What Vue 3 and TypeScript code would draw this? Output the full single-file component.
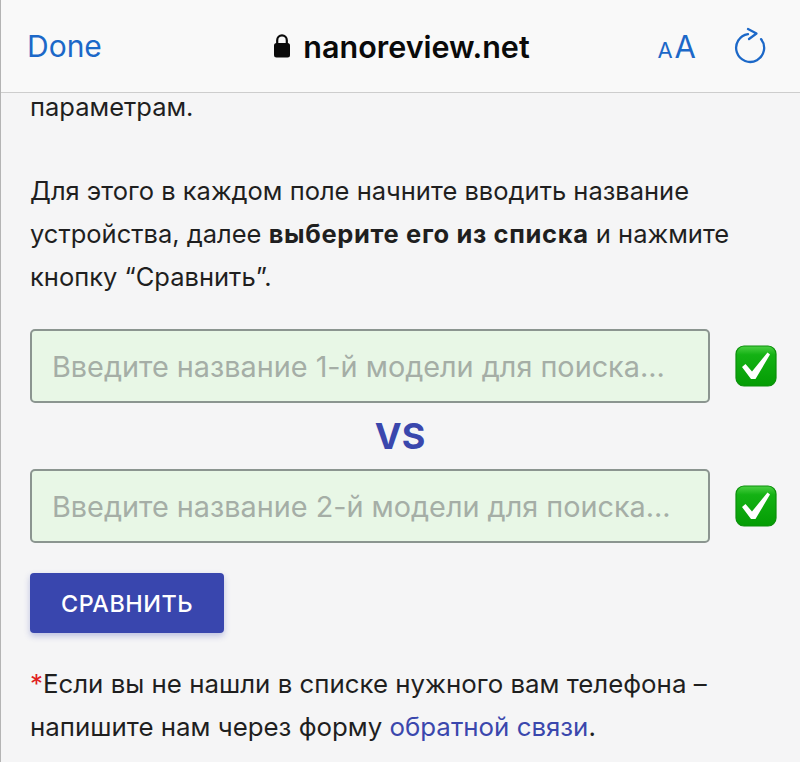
<script setup lang="ts">
const fields = [
  "Введите название 1-й модели для поиска...",
  "Введите название 2-й модели для поиска...",
];
</script>

<template>
  <div class="page">
    <header class="bar">
      <span class="done">Done</span>
      <span class="address">
        <svg class="lock" width="18" height="26" viewBox="0 0 18 26">
          <path d="M4.200 11V7.200a4.800 4.800 0 0 1 9.600 0V11" fill="none" stroke="#0a0a0a" stroke-width="2.200" />
          <rect x="1" y="10" width="16" height="14.500" rx="2.500" fill="#0a0a0a" />
        </svg>
        nanoreview.net
      </span>
      <span class="tools">
        <span class="aa"><small>A</small>A</span>
        <svg class="reload" width="32" height="40" viewBox="0 0 32 40">
          <path d="M27 13.100A14 14 0 1 1 14 8.100" fill="none" stroke="#1c68c8" stroke-width="2.300" stroke-linecap="round" />
          <path d="M14 3l8.500 4.500L15 13" fill="none" stroke="#1c68c8" stroke-width="2.300" stroke-linecap="round" stroke-linejoin="round" />
        </svg>
      </span>
    </header>

    <main class="content">
      <p class="lead">параметрам.</p>
      <p class="intro">
        Для этого в каждом поле начните вводить название устройства, далее
        <b>выберите его из списка</b> и нажмите кнопку “Сравнить”.
      </p>

      <template v-for="(placeholder, i) in fields" :key="i">
        <div v-if="i > 0" class="vs">VS</div>
        <div class="field">
          <div class="input">{{ placeholder }}</div>
          <svg class="check" width="42" height="42" viewBox="0 0 42 42">
            <defs>
              <linearGradient :id="`green${i}`" x1="0" y1="0" x2="0" y2="1">
                <stop offset="0" stop-color="#4ccf44" />
                <stop offset="0.22" stop-color="#14b214" />
                <stop offset="1" stop-color="#049c04" />
              </linearGradient>
            </defs>
            <rect x="1" y="1" width="40" height="40" rx="8" :fill="`url(#green${i})`" stroke="#0a8f0a" stroke-width="1.200" />
            <path d="M7 22l3.500-3 6.500 7.500L32.500 7.500l2.500 2-14.500 24.500h-4.500z" fill="#fff" />
          </svg>
        </div>
      </template>

      <button class="compare" type="button">СРАВНИТЬ</button>

      <p class="note">
        <span class="star">*</span>Если вы не нашли в списке нужного вам телефона –
        напишите нам через форму <a class="link">обратной связи</a>.
      </p>
    </main>
  </div>
</template>

<style scoped>
.page {
  width: 800px;
  height: 762px;
  overflow: hidden;
  box-sizing: border-box;
  border-left: 1px solid #b4b4b4;
  background: #f5f5f6;
  font-family: Inter, "Noto Sans", sans-serif;
  color: #1f1f1f;
}

.bar {
  position: relative;
  z-index: 1;
  height: 93px;
  box-sizing: border-box;
  padding: 0 26px;
  display: grid;
  grid-template-columns: 1fr auto 1fr;
  align-items: center;
  background: #f9f9f9;
  border-bottom: 1px solid #cdcdcd;
}

.done {
  font-size: 30px;
  color: #1c68c8;
}

.address {
  display: flex;
  align-items: center;
  gap: 12px;
  margin-left: 2px;
  font-size: 30.500px;
  font-weight: 600;
  color: #0a0a0a;
}

.tools {
  justify-self: end;
  margin-right: 8px;
  display: flex;
  align-items: center;
  gap: 38px;
}

.aa {
  font-size: 31px;
  color: #1c68c8;
  line-height: 1;
}

.aa small {
  font-size: 22px;
  margin-right: 2px;
}

.content {
  margin-top: -8px;
  padding: 0 20px 0 29px;
  font-size: 25.500px;
  line-height: 43px;
}

.content p {
  margin: 0;
}

.intro {
  margin-top: 41px !important;
  margin-bottom: 31px !important;
}

.intro b {
  letter-spacing: 0.650px;
}

.field {
  display: flex;
  align-items: center;
  gap: 25px;
}

.input {
  width: 680px;
  height: 74px;
  box-sizing: border-box;
  padding-left: 20px;
  flex: none;
  display: flex;
  align-items: center;
  background: #e8f7e6;
  border: 2px solid #8b9590;
  border-radius: 5px;
  font-size: 28.800px;
  color: #a5aea6;
  white-space: nowrap;
}

.check {
  flex: none;
}

.vs {
  margin: 12px 10px 11px 0;
  height: 43px;
  text-align: center;
  font-size: 36px;
  font-weight: 700;
  color: #3a47ad;
}

.compare {
  display: block;
  margin-top: 30px;
  width: 194px;
  height: 60px;
  background: #3946ae;
  color: #fff;
  border: 0;
  border-radius: 4px;
  box-shadow: 0 3px 6px rgba(57, 70, 174, 0.3);
  font-family: Inter, "Noto Sans", sans-serif;
  font-size: 23.400px;
  font-weight: 500;
  letter-spacing: 0.5px;
}

.note {
  margin-top: 29px !important;
  font-size: 25.850px;
}

.star {
  color: #e02020;
}

.link {
  color: #3a47ad;
}
</style>

<style>
html,
body {
  margin: 0;
  background: #f5f5f6;
}
</style>
